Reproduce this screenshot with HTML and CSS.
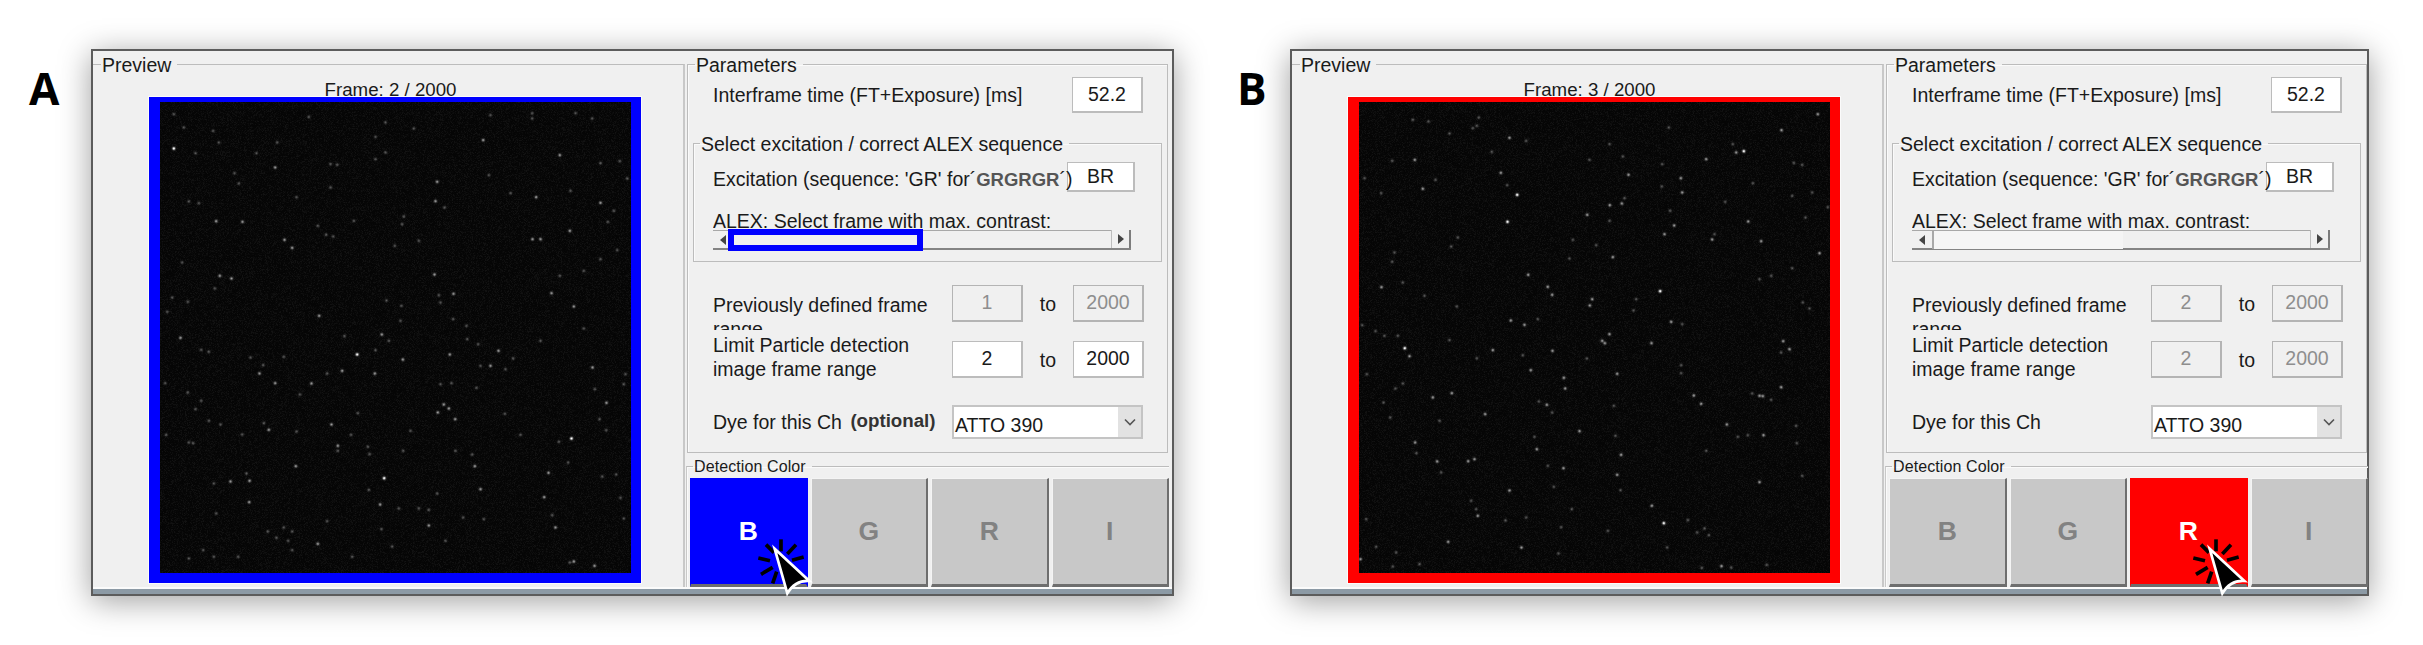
FILE: index.html
```html
<!DOCTYPE html>
<html lang="en">
<head>
    <meta charset="UTF-8">
    <title>Detection color selection</title>
    <link rel="stylesheet" href="styles.css">
</head>
<body>
    <section class="panel panel-a">
        <div class="panel-letter">A</div>
        <div class="window">
            <div class="window-body">
                <fieldset class="group preview">
                    <legend>Preview</legend>
                    <div class="frame-label">Frame: 2 / 2000</div>
                    <div class="frame frame-blue"><canvas class="stars" width="471" height="471" data-set="a"></canvas></div>
                </fieldset>
                <div class="side">
                    <fieldset class="group params">
                        <legend>Parameters</legend>
                        <div class="row row-time">
                            <span>Interframe time (FT+Exposure) [ms]</span>
                            <div class="edit">52.2</div>
                        </div>
                        <fieldset class="group alex">
                            <legend>Select excitation / correct ALEX sequence</legend>
                            <div class="row-excitation">
                                <span class="excitation-text">Excitation (sequence: 'GR' for´<b>GRGRGR</b>´)</span>
                                <div class="edit edit-short">BR</div>
                            </div>
                            <div class="alex-text">ALEX: Select frame with max. contrast:</div>
                            <div class="scrollbar">
                                <div class="scroll-btn"><i class="arrow-left"></i></div>
                                <div class="scroll-thumb marked"></div>
                                <div class="scroll-track"></div>
                                <div class="scroll-btn scroll-btn-end"><i class="arrow-right"></i></div>
                            </div>
                        </fieldset>
                        <div class="row row-range row-prev">
                            <div class="range-text">Previously defined frame range</div>
                            <div class="edit disabled">1</div>
                            <span class="to">to</span>
                            <div class="edit disabled">2000</div>
                        </div>
                        <div class="row row-range row-limit">
                            <div class="range-text">Limit Particle detection image frame range</div>
                            <div class="edit">2</div>
                            <span class="to">to</span>
                            <div class="edit">2000</div>
                        </div>
                        <div class="row row-dye">
                            <div class="dye-text">Dye for this Ch <b>(optional)</b></div>
                            <div class="combo">
                                <span class="combo-text">ATTO 390</span>
                                <span class="combo-btn"><svg width="12" height="8" viewBox="0 0 12 8"><path d="M1 1.5 6 6.5 11 1.5" fill="none" stroke="#555" stroke-width="1.6"/></svg></span>
                            </div>
                        </div>
                    </fieldset>
                    <fieldset class="group detection">
                        <legend>Detection Color</legend>
                        <div class="color-btns">
                            <div class="color-btn on-blue">B
                                <svg class="cursor cursor-a" width="120" height="80" viewBox="0 0 360 240"><use href="#click-cursor"/></svg>
                            </div>
                            <div class="color-btn">G</div>
                            <div class="color-btn">R</div>
                            <div class="color-btn">I</div>
                        </div>
                    </fieldset>
                </div>
            </div>
            <div class="window-edge"></div>
        </div>
    </section>

    <section class="panel panel-b">
        <div class="panel-letter">B</div>
        <div class="window window-b">
            <div class="window-body">
                <fieldset class="group preview">
                    <legend>Preview</legend>
                    <div class="frame-label">Frame: 3 / 2000</div>
                    <div class="frame frame-red"><canvas class="stars" width="471" height="471" data-set="b"></canvas></div>
                </fieldset>
                <div class="side">
                    <fieldset class="group params">
                        <legend>Parameters</legend>
                        <div class="row row-time">
                            <span>Interframe time (FT+Exposure) [ms]</span>
                            <div class="edit">52.2</div>
                        </div>
                        <fieldset class="group alex">
                            <legend>Select excitation / correct ALEX sequence</legend>
                            <div class="row-excitation">
                                <span class="excitation-text">Excitation (sequence: 'GR' for´<b>GRGRGR</b>´)</span>
                                <div class="edit edit-short">BR</div>
                            </div>
                            <div class="alex-text">ALEX: Select frame with max. contrast:</div>
                            <div class="scrollbar">
                                <div class="scroll-btn"><i class="arrow-left"></i></div>
                                <div class="scroll-thumb"></div>
                                <div class="scroll-track"></div>
                                <div class="scroll-btn scroll-btn-end"><i class="arrow-right"></i></div>
                            </div>
                        </fieldset>
                        <div class="row row-range row-prev">
                            <div class="range-text">Previously defined frame range</div>
                            <div class="edit disabled">2</div>
                            <span class="to">to</span>
                            <div class="edit disabled">2000</div>
                        </div>
                        <div class="row row-range row-limit">
                            <div class="range-text">Limit Particle detection image frame range</div>
                            <div class="edit disabled">2</div>
                            <span class="to">to</span>
                            <div class="edit disabled">2000</div>
                        </div>
                        <div class="row row-dye">
                            <div class="dye-text">Dye for this Ch</div>
                            <div class="combo">
                                <span class="combo-text">ATTO 390</span>
                                <span class="combo-btn"><svg width="12" height="8" viewBox="0 0 12 8"><path d="M1 1.5 6 6.5 11 1.5" fill="none" stroke="#555" stroke-width="1.6"/></svg></span>
                            </div>
                        </div>
                    </fieldset>
                    <fieldset class="group detection">
                        <legend>Detection Color</legend>
                        <div class="color-btns">
                            <div class="color-btn">B</div>
                            <div class="color-btn">G</div>
                            <div class="color-btn on-red">R
                                <svg class="cursor cursor-b" width="120" height="80" viewBox="0 0 360 240"><use href="#click-cursor"/></svg>
                            </div>
                            <div class="color-btn">I</div>
                        </div>
                    </fieldset>
                </div>
            </div>
            <div class="window-edge"></div>
        </div>
    </section>

    <svg class="defs" width="0" height="0">
        <defs>
            <g id="click-cursor">
                <g stroke="#000" stroke-width="11" fill="none">
                    <path d="M108 44 132 68"/>
                    <path d="M153 28V64"/>
                    <path d="M198 44 172 72"/>
                    <path d="M221 81 186 91"/>
                    <path d="M85 84 120 92"/>
                    <path d="M93 133 128 112"/>
                    <path d="M128 160 140 125"/>
                </g>
                <path d="M134 56 238 153Q196 150 172 190Z" fill="#000" stroke="#fff" stroke-width="8" stroke-linejoin="miter"/>
            </g>
        </defs>
    </svg>

    <script src="stars.js"></script>
</body>
</html>
```
FILE: styles.css
```css
* {
    margin: 0;
    padding: 0;
    box-sizing: border-box;
}

body {
    font-family: "Liberation Sans", Arial, sans-serif;
    font-size: 19.5px;
    color: #1a1a1a;
    background: #fff;
    width: 2423px;
    height: 645px;
    overflow: hidden;
    display: flex;
    align-items: flex-start;
}

.panel {
    display: flex;
    align-items: flex-start;
    padding-top: 49px;
}

.panel-a {
    width: 1237px;
    padding-left: 29px;
}

.panel-letter {
    font-family: "Open Sans", sans-serif;
    font-weight: 700;
    font-size: 44px;
    line-height: 40px;
    color: #000;
    margin-top: 19px;
}

.panel-a .panel-letter {
    width: 62px;
}

.panel-b .panel-letter {
    width: 53px;
}

.window {
    width: 1083px;
    height: 547px;
    border: 2px solid #5c5c5c;
    background: #f0f0f0;
    box-shadow: 0 5px 30px rgba(0, 0, 0, 0.38);
    display: flex;
    flex-direction: column;
}

.window-b {
    width: 1079px;
}

.window-body {
    height: 536px;
    padding-top: 2px;
    display: grid;
    grid-template-columns: 592px 481px;
    column-gap: 2px;
}

.window-edge {
    height: 7px;
    border-top: 2px solid #fbfbfb;
    background: #8c9aa5;
}

.group {
    min-width: 0;
    border: 1px solid #bcbcbc;
    box-shadow: inset 1px 1px 0 #fafafa;
}

.group > legend {
    margin-left: 7px;
    padding: 0 6px 0 1px;
    height: 22px;
    line-height: 25px;
}

.preview {
    height: 534px;
    padding-left: 56px;
    border-left: 0;
    border-bottom: 0;
    box-shadow: none;
    border-right: 2px solid #c8c8c8;
}

.preview > legend {
    margin-left: -48px;
}

.frame-label {
    width: 492px;
    height: 22px;
    line-height: 30px;
    overflow: hidden;
    text-align: center;
    padding-right: 9px;
    font-size: 18.7px;
}

.frame {
    position: relative;
    width: 492px;
    height: 486px;
    border-style: solid;
    border-width: 5px 10px 10px 11px;
    outline: 1px solid rgba(255, 255, 255, 0.7);
}

.frame-blue {
    border-color: #0000ff;
}

.frame-red {
    border-color: #ff0000;
}

.stars {
    display: block;
    background: #0a0a0a;
}

.params {
    height: 400px;
    padding-top: 2px;
}

.row {
    display: flex;
    align-items: center;
    padding: 0 24px 0 25px;
}

.row-time {
    height: 36px;
    justify-content: space-between;
}

.edit {
    flex: none;
    width: 71px;
    height: 37px;
    line-height: 33px;
    text-align: center;
    background: #fff;
    border: 2px solid #c4c4c4;
    border-width: 1px 2px 2px 1px;
    border-color: #bcbcbc;
}

.row-time .edit {
    height: 36px;
}

.edit-short {
    width: 68px;
    height: 30px;
    line-height: 26px;
}

.disabled {
    background: #f0f0f0;
    color: #8e8e8e;
    border-color: #b4b4b4;
}

.alex {
    margin: 19px 5px 0;
    height: 130px;
    padding: 8px 0 0 19px;
}

.alex > legend {
    margin-left: -13px;
    padding-left: 1px;
}

.row-excitation {
    display: flex;
    height: 30px;
    align-items: center;
}

.excitation-text {
    position: relative;
    z-index: 1;
    flex: none;
    width: 354px;
    white-space: nowrap;
    padding-top: 4px;
}

.excitation-text b {
    font-size: 18.5px;
    color: #555;
}

.alex-text {
    height: 20px;
    margin-top: 18px;
    line-height: 22px;
    overflow: hidden;
    white-space: nowrap;
}

.scrollbar {
    display: flex;
    width: 418px;
    height: 20px;
    border-top: 1px solid #a8a8a8;
    border-bottom: 2px solid #848484;
}

.scroll-btn {
    flex: none;
    width: 20px;
    display: flex;
    align-items: center;
    justify-content: center;
    background: #f0f0f0;
}

.scroll-btn-end {
    border-left: 1px solid #bdbdbd;
    border-right: 2px solid #7c7c7c;
    margin-top: -1px;
}

.arrow-left,
.arrow-right {
    width: 0;
    height: 0;
    border-top: 5px solid transparent;
    border-bottom: 5px solid transparent;
}

.arrow-left {
    border-right: 6px solid #444;
}

.arrow-right {
    border-left: 6px solid #444;
}

.scroll-thumb {
    flex: none;
    width: 191px;
    background: #f5f5f5;
    border-left: 2px solid #a8a8a8;
    margin-bottom: -1px;
}

.scroll-thumb.marked {
    position: relative;
    width: 195px;
    height: 22px;
    margin: -2px 0 0 -5px;
    background: #f0f0f0;
    border: 6px solid #0000ff;
}

.scroll-track {
    flex: 1;
    background: #f0f0f0;
}

.row-range {
    height: 37px;
    align-items: flex-start;
}

.row-prev {
    margin-top: 23px;
}

.row-limit {
    margin-top: 19px;
}

.range-text {
    flex: none;
    width: 239px;
    padding-right: 20px;
    line-height: 24px;
    overflow: hidden;
}

.row-prev .range-text {
    height: 37px;
    margin-top: 8px;
}

.row-limit .range-text {
    height: 48px;
    margin-top: -8px;
}

.to {
    flex: none;
    width: 50px;
    text-align: center;
    line-height: 38px;
}

.row-dye {
    margin-top: 27px;
    height: 34px;
}

.dye-text {
    flex: none;
    width: 239px;
    white-space: nowrap;
}

.dye-text b {
    font-size: 18.7px;
    font-weight: 700;
    color: #333;
    margin-left: 3px;
    position: relative;
    top: -2px;
}

.combo {
    flex: none;
    width: 191px;
    height: 34px;
    display: flex;
    background: #fff;
    border: 2px solid #c4c4c4;
}

.combo-text {
    flex: 1;
    padding-left: 1px;
    line-height: 36px;
}

.combo-btn {
    flex: none;
    width: 23px;
    background: #e2e2e2;
    display: flex;
    align-items: center;
    justify-content: center;
}

.detection {
    width: 483px;
    margin: 3px 0 0 -1px;
    padding: 2px 0 0 3px;
    border-left: 1px solid #c8c8c8;
    border-right: 0;
    border-bottom: 0;
}

.detection > legend {
    margin-left: 3px;
    font-size: 16px;
    letter-spacing: 0.1px;
    height: 20px;
    line-height: 22px;
}

.color-btns {
    display: grid;
    grid-template-columns: repeat(4, 1fr);
    column-gap: 3px;
    height: 109px;
}

.color-btn {
    position: relative;
    display: flex;
    align-items: center;
    justify-content: center;
    background: #c8c8c8;
    color: #828282;
    font-size: 26.5px;
    font-weight: 700;
    border-style: solid;
    border-width: 1px 2px 3px 1px;
    border-color: #f4f4f4 #6e6e6e #6e6e6e #f4f4f4;
}

.on-blue {
    background: #0000ff;
    color: #fff;
    border-color: #0000ff #0000ff #6e6e6e;
}

.on-red {
    background: #ff0000;
    color: #fff;
    border-color: #ff0000 #ff0000 #6e6e6e;
}

.cursor {
    position: absolute;
    top: 51px;
    z-index: 2;
}

.cursor-a {
    left: 39px;
}

.cursor-b {
    left: 34px;
}

.defs {
    position: absolute;
}
```
FILE: stars.js
```js
// positions read off the two frames, in 3x coordinates
var STARS = {
    a: {
        3: [40,138, 590,756, 671,1127, 1233,1008],
        2: [968,113, 1198,158, 825,296, 1127,284, 1320,301, 1228,385, 344,195, 167,356, 246,358, 372,412, 395,436, 178,520, 213,528, 476,640, 60,706, 664,696, 727,771, 643,813, 868,756, 1014,745, 990,790, 1296,795, 1338,901, 850,906, 832,930, 865,918, 884,950, 513,966, 325,982, 210,1137, 267,1135, 266,1199, 406,1091, 943,1091, 960,1160, 1164,1111, 1151,1184, 805,1269, 1185,1275, 1240,1377, 1302,1390, 472,1324, 659,1206, 532,1030, 1173,572, 1240,612, 879,574, 822,516, 1116,410, 1140,410, 830,238, 545,805, 297,813, 344,842, 453,843],
        1: [40,35, 70,75, 158,85, 105,152, 175,120, 445,43, 510,185, 530,187, 408,284, 510,255, 85,297, 115,302, 235,243, 222,212, 288,152, 350,120, 645,103, 760,78, 675,60, 645,170, 675,150, 580,355, 472,370, 497,397, 518,402, 725,365, 730,342, 852,315, 703,430, 775,415, 985,218, 1050,272, 1115,48, 1115,32, 990,38, 1245,32, 1295,48, 1320,182, 1378,176, 1400,228, 1230,265, 1360,325, 1342,358, 1370,443, 1320,470, 1270,505, 1198,520, 65,480, 35,585, 20,628, 163,558, 82,598, 122,742, 145,748, 270,765, 308,788, 370,763, 500,813, 552,701, 645,743, 685,715, 720,655, 678,594, 723,610, 835,578, 840,600, 878,650, 918,670, 920,710, 953,725, 1140,715, 1270,678, 1058,768, 1035,800, 960,790, 948,856, 840,845, 873,842, 418,876, 14,842, 82,870, 122,895, 105,920, 145,955, 180,966, 310,962, 245,996, 17,997, 85,1020, 98,1022, 408,987, 592,932, 572,997, 622,1033, 627,1055, 532,1045, 750,985, 728,1045, 885,1045, 935,1056, 1033,934, 1080,997, 1195,1018, 1337,983, 1317,950, 1395,815, 1390,845, 1303,860, 1223,1080, 1325,1122, 1367,1116, 1380,1186, 1390,1248, 1175,1238, 970,1250, 908,1245, 855,1315, 695,1332, 663,1280, 830,1173, 625,1162, 715,1218, 775,1218, 805,1222, 500,1256, 370,1275, 395,1287, 348,1306, 383,1315, 395,1343, 322,1287, 258,1113, 160,1143, 167,1233, 128,1343, 85,1368, 160,1363, 233,1363, 575,1363, 1228,1380]
    },
    b: {
        3: [473,277, 444,358, 136,737, 1153,146, 902,566, 913,1262],
        2: [1266,83, 1375,35, 1130,150, 1040,170, 807,217, 964,227, 968,270, 787,303, 751,308, 683,337, 424,211, 166,172, 190,259, 450,106, 1166,357, 1205,416, 1058,411, 944,369, 915,395, 760,464, 506,517, 565,553, 578,577, 66,554, 150,761, 579,745, 400,743, 728,715, 736,722, 750,695, 935,658, 876,722, 454,654, 495,667, 698,590, 691,609, 1290,740, 1271,716, 1265,854, 773,814, 613,826, 617,858, 514,803, 277,872, 220,885, 377,935, 562,907, 1003,879, 1025,904, 1200,880, 1210,881, 1102,966, 1212,998, 660,986, 532,1040, 785,1057, 773,1117, 612,1097, 450,1164, 1200,1139, 877,1210, 355,1240, 266,1318, 486,1335, 1086,1391, 3,1370, 233,1077, 345,1070, 326,1076, 167,1020, 1380,452],
        1: [160,52, 207,57, 270,93, 340,77, 352,70, 358,45, 500,115, 397,148, 98,175, 15,227, 228,232, 65,272, 690,172, 750,125, 790,162, 908,185, 928,75, 1120,125, 1303,181, 1328,187, 1180,242, 1298,280, 1358,270, 1405,314, 1338,345, 1097,298, 932,325, 750,355, 795,287, 907,252, 443,248, 710,428, 630,468, 640,412, 295,405, 275,432, 105,450, 98,478, 130,540, 195,580, 292,612, 48,686, 75,700, 115,700, 8,668, 270,713, 352,767, 490,758, 535,650, 822,624, 830,590, 968,665, 1065,395, 1298,497, 1235,520, 1200,530, 1350,618, 1330,600, 1265,750, 965,788, 965,812, 1178,873, 1235,892, 682,768, 22,815, 130,843, 108,858, 72,900, 92,945, 240,955, 538,897, 578,930, 763,910, 1135,1003, 1165,998, 1310,970, 1312,1022, 1040,1045, 1328,1120, 525,1003, 768,1000, 565,1090, 583,1153, 783,1163, 245,1110, 171,1052, 335,1195, 350,1220, 438,1254, 500,1245, 637,1220, 605,1274, 745,1285, 985,1253, 1035,1278, 1048,1298, 1013,1290, 923,1335, 1027,1396, 1222,1387, 1115,1395, 50,1333, 110,1350, 20,1250, 100,1392, 180,1385, 597,1353]
    }
};

var PEAK = { 1: 75, 2: 140, 3: 250 };

function drawStars(canvas) {
    var ctx = canvas.getContext('2d');
    var w = canvas.width;
    var h = canvas.height;
    var img = ctx.createImageData(w, h);
    var glow = new Float32Array(w * h);
    var list = STARS[canvas.dataset.set];
    var seed = canvas.dataset.set === 'a' ? 4711 : 1033;

    function rnd() {
        seed = (seed * 16807) % 2147483647;
        return seed / 2147483647;
    }

    // camera background
    for (var i = 0; i < w * h; i++) {
        var n = rnd();
        glow[i] = 5 + n * n * n * 14;
    }

    for (var level in list) {
        var pts = list[level];
        for (var k = 0; k < pts.length; k += 2) {
            var cx = pts[k] / 3;
            var cy = pts[k + 1] / 3;
            for (var y = Math.floor(cy) - 4; y <= cy + 4; y++) {
                for (var x = Math.floor(cx) - 4; x <= cx + 4; x++) {
                    if (x < 0 || y < 0 || x >= w || y >= h) continue;
                    var d = (x - cx) * (x - cx) + (y - cy) * (y - cy);
                    glow[y * w + x] += PEAK[level] * Math.exp(-d / 2.2);
                }
            }
        }
    }

    for (var p = 0; p < w * h; p++) {
        var v = Math.min(255, glow[p]);
        img.data[p * 4] = v;
        img.data[p * 4 + 1] = v;
        img.data[p * 4 + 2] = v;
        img.data[p * 4 + 3] = 255;
    }
    ctx.putImageData(img, 0, 0);
}

document.querySelectorAll('.stars').forEach(drawStars);
```
